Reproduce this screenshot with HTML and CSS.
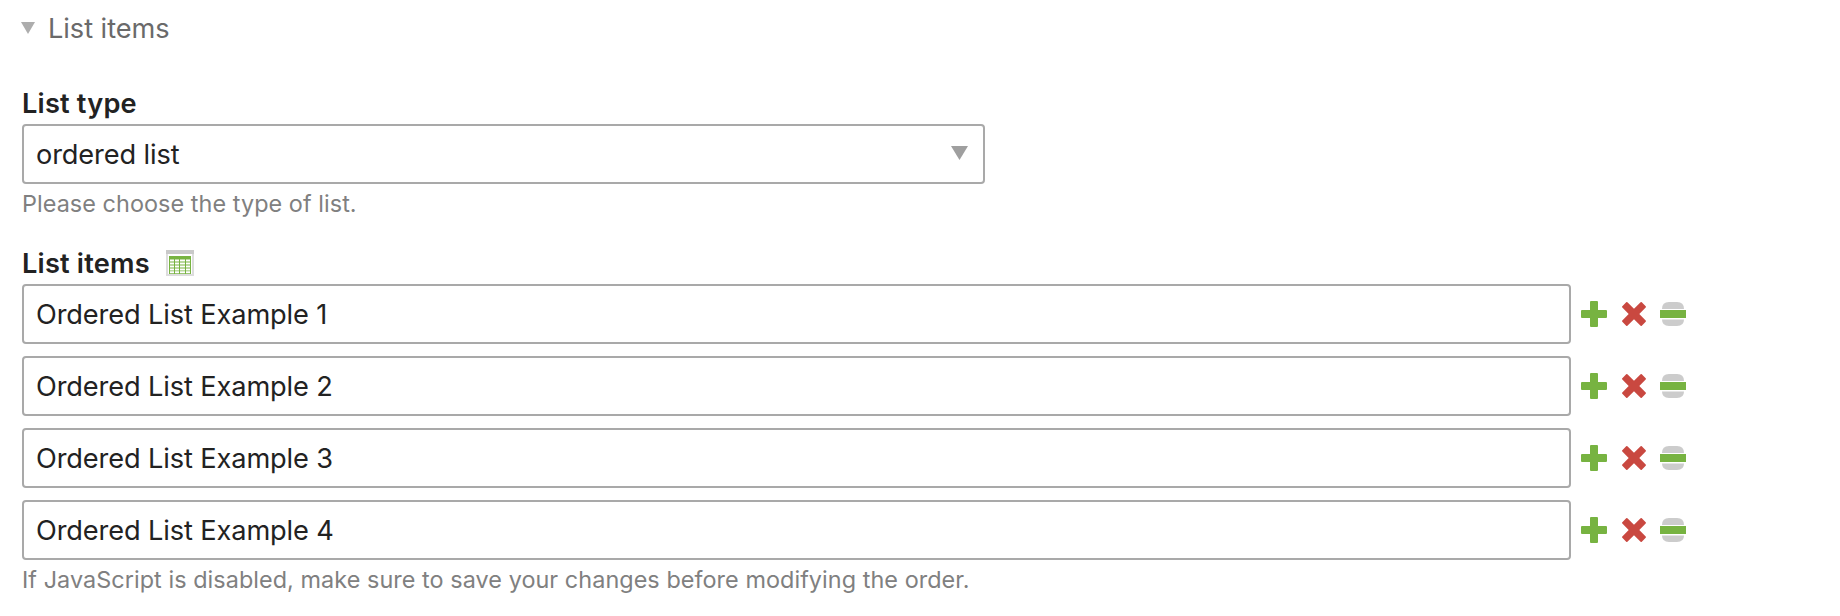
FILE: index.html
```html
<!DOCTYPE html>
<html lang="en">
<head>
<meta charset="utf-8">
<title>List items</title>
<link rel="stylesheet" href="styles.css">
</head>
<body>
<svg class="defs" width="0" height="0" aria-hidden="true">
  <symbol id="add" viewBox="0 0 26 26"><path fill="#77b341" d="M10 0h6q1 0 1 1v8h8q1 0 1 1v6q0 1-1 1h-8v8q0 1-1 1h-6q-1 0-1-1v-8H1q-1 0-1-1v-6q0-1 1-1h8V1q0-1 1-1z"/></symbol>
  <symbol id="delete" viewBox="0 0 26 26"><path fill="#c94840" d="M5.2 1.3q.6-.6 1.200 0L13 7.700l6.600-6.400q.6-.6 1.200 0l3.900 3.900q.6.6 0 1.200L18.300 13l6.400 6.600q.6.6 0 1.200l-3.900 3.900q-.6.6-1.200 0L13 18.300l-6.600 6.400q-.6.6-1.200 0l-3.900-3.900q-.6-.6 0-1.200L7.700 13 1.300 6.400q-.6-.6 0-1.200z"/></symbol>
  <symbol id="drag" viewBox="0 0 26 26"><path fill="#ccc" d="M2 8q0-7 7-7h8q7 0 7 7zM2 18.500h22q0 6.500-7 6.500H9q-7 0-7-6.500z"/><path fill="#77b341" d="M0 9h26v8H0z"/></symbol>
</svg>
<main class="fieldset">
  <h1 class="legend"><svg class="toggle" viewBox="0 0 14 12"><path fill="#adadad" d="M0 0h14L7 12z"/></svg><span>List items</span></h1>
  <section class="widget">
    <label class="label label-type">List type</label>
    <div class="field select"><span class="value value-type">ordered list</span>
      <svg class="arrow" viewBox="0 0 17 14"><path fill="#9f9f9f" d="M0 0h17L8.500 14z"/></svg>
    </div>
    <p class="help help-type">Please choose the type of list.</p>
  </section>
  <section class="widget items">
    <div class="label label-items"><span>List items</span>
      <svg class="table" viewBox="0 0 28 26"><path fill="#ddd" d="M0 0h28v26H0z"/><path fill="#c9c9c9" d="M0 0h28v4H0z"/><path fill="#fff" d="M2 4h24v20H2z"/><path fill="#77b341" d="M3 6h22v18H3z"/><path fill="#fff" d="M4 9.500h4v2H4zm5 0h4v2H9zm5 0h5v2h-5zm6 0h4v2h-4zM4 12.500h4v2H4zm5 0h4v2H9zm5 0h5v2h-5zm6 0h4v2h-4zM4 15.500h4v2H4zm5 0h4v2H9zm5 0h5v2h-5zm6 0h4v2h-4zM4 18.500h4v2H4zm5 0h4v2H9zm5 0h5v2h-5zm6 0h4v2h-4zM4 21.300h4v2H4zm5 0h4v2H9zm5 0h5v2h-5zm6 0h4v2h-4z"/></svg>
    </div>
    <div class="rows">
      <div class="row"><div class="field"><span class="value">Ordered List Example 1</span></div><div class="actions"><svg><use href="#add"/></svg><svg><use href="#delete"/></svg><svg><use href="#drag"/></svg></div></div>
      <div class="row"><div class="field"><span class="value">Ordered List Example 2</span></div><div class="actions"><svg><use href="#add"/></svg><svg><use href="#delete"/></svg><svg><use href="#drag"/></svg></div></div>
      <div class="row"><div class="field"><span class="value">Ordered List Example 3</span></div><div class="actions"><svg><use href="#add"/></svg><svg><use href="#delete"/></svg><svg><use href="#drag"/></svg></div></div>
      <div class="row"><div class="field"><span class="value">Ordered List Example 4</span></div><div class="actions"><svg><use href="#add"/></svg><svg><use href="#delete"/></svg><svg><use href="#drag"/></svg></div></div>
    </div>
    <p class="help help-items">If JavaScript is disabled, make sure to save your changes before modifying the order.</p>
  </section>
</main>
</body>
</html>
```
FILE: styles.css
```css
* { box-sizing: border-box; }
body { margin: 0; background: #fff; color: #222; font: 400 27.2px/34px Inter, "Liberation Sans", sans-serif; }
svg { display: block; flex: none; }
.defs { display: none; }
.fieldset { padding: 11px 22px 0; }
.legend { display: flex; align-items: center; gap: 13px; height: 34px; margin: 0 0 41px -1px; color: #6a6a6a; font-size: 27.2px; font-weight: 400; letter-spacing: -.05px; }
.legend span, .label-items span { padding-top: 2px; }
.toggle { width: 14px; height: 12px; }
.label { display: flex; align-items: center; height: 34px; font-weight: 600; letter-spacing: .2px; }
.label-type { padding-top: 2px; margin-bottom: 4px; }
.field { display: flex; align-items: center; justify-content: space-between; height: 60px; width: 1549px; padding: 0 12px; border: 2px solid #a9a9a9; border-radius: 4px; background: #fff; }
.value { padding-top: 2px; letter-spacing: -.12px; }
.select { width: 963px; padding-right: 15px; }
.arrow { width: 17px; height: 14px; margin-bottom: 2px; }
.help { margin: 4px 0 0; height: 32px; font-size: 23.400px; line-height: 32px; letter-spacing: .06px; color: #808080; white-space: nowrap; }
.items { margin-top: 26px; }
.label-items { gap: 16px; margin-bottom: 4px; }
.table { width: 28px; height: 26px; }
.rows { display: grid; gap: 12px; }
.row { display: flex; align-items: center; gap: 10px; }
.actions { display: flex; gap: 14px; }
.actions svg { width: 26px; height: 26px; }
.actions svg:last-child { margin-left: -1px; }
```
